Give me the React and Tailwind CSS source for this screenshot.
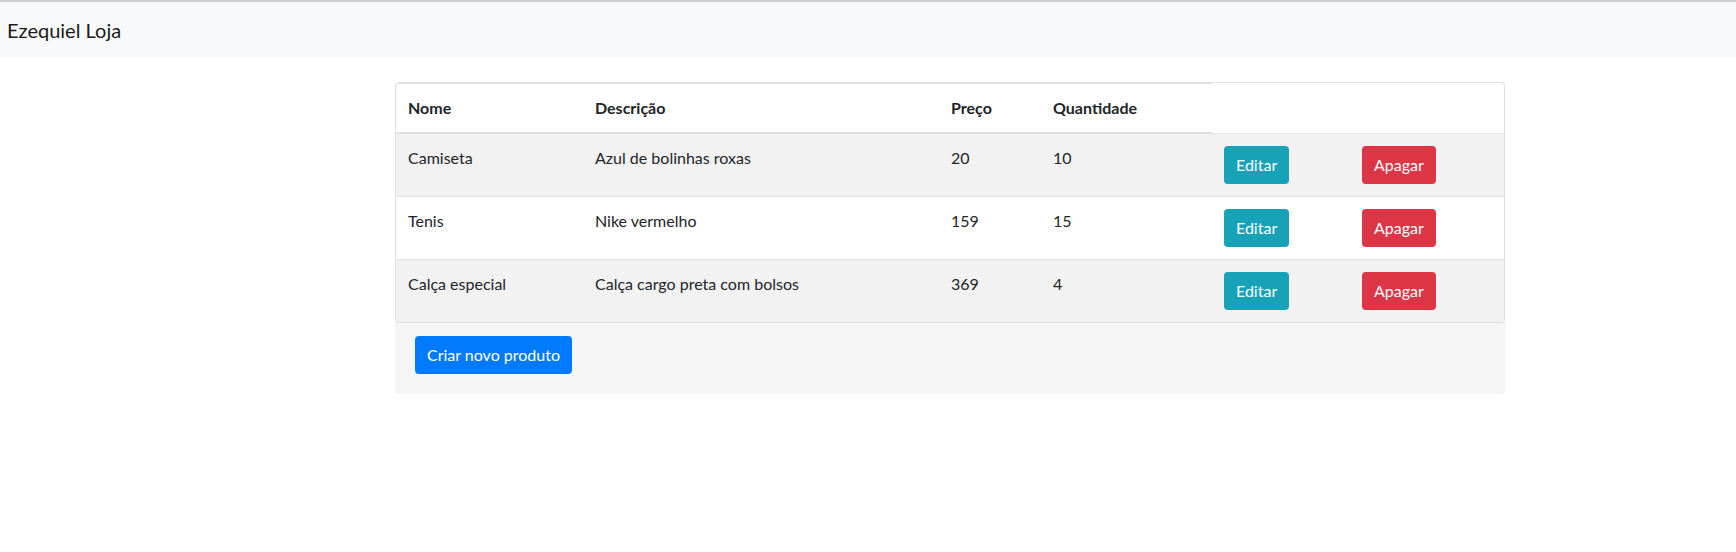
const products = [
  { nome: 'Camiseta', descricao: 'Azul de bolinhas roxas', preco: 20, quantidade: 10 },
  { nome: 'Tenis', descricao: 'Nike vermelho', preco: 159, quantidade: 15 },
  { nome: 'Calça especial', descricao: 'Calça cargo preta com bolsos', preco: 369, quantidade: 4 },
]

export default function App() {
  return (
    <div className="min-h-[552px] bg-white text-[#212529] font-['Lato','Noto_Sans',sans-serif] text-[16px] leading-6">
      <div className="h-[2px] bg-[#cdcfd2]"></div>
      <nav className="h-[56px] bg-[#f8f9fa] flex items-center px-[7px]">
        <span className="text-[20px] leading-[30px] text-[#1a1a1a]">Ezequiel Loja</span>
      </nav>

      <div className="ml-[395px] mt-[24px] w-[1110px] bg-[#f5f5f5] rounded pb-5">
        <div className="bg-white border border-[#dfdfdf] rounded overflow-hidden">
          <table className="w-full table-fixed border-collapse">
            <colgroup>
              <col className="w-[187px]" />
              <col className="w-[356px]" />
              <col className="w-[102px]" />
              <col className="w-[171px]" />
              <col className="w-[138px]" />
              <col />
            </colgroup>
            <thead>
              <tr>
                <th className="text-left font-bold px-3 py-3 border-t border-b-2 border-[#dee2e6] align-bottom">Nome</th>
                <th className="text-left font-bold px-3 py-3 border-t border-b-2 border-[#dee2e6] align-bottom">Descrição</th>
                <th className="text-left font-bold px-3 py-3 border-t border-b-2 border-[#dee2e6] align-bottom">Preço</th>
                <th className="text-left font-bold px-3 py-3 border-t border-b-2 border-[#dee2e6] align-bottom">Quantidade</th>
              </tr>
            </thead>
            <tbody>
              {products.map((p, i) => (
                <tr key={p.nome} className={i % 2 === 0 ? 'bg-[#f2f2f2]' : 'bg-white'}>
                  <td className="p-3 align-top border-t border-[#dee2e6]">{p.nome}</td>
                  <td className="p-3 align-top border-t border-[#dee2e6]">{p.descricao}</td>
                  <td className="p-3 align-top border-t border-[#dee2e6]">{p.preco}</td>
                  <td className="p-3 align-top border-t border-[#dee2e6]">{p.quantidade}</td>
                  <td className="p-3 align-top border-t border-[#dee2e6]">
                    <button className="h-[38px] px-3 rounded bg-[#17a2b8] text-white">Editar</button>
                  </td>
                  <td className="p-3 align-top border-t border-[#dee2e6]">
                    <button className="h-[38px] px-3 rounded bg-[#dc3545] text-white">Apagar</button>
                  </td>
                </tr>
              ))}
            </tbody>
          </table>
        </div>
        <button className="ml-5 mt-[13px] h-[38px] px-3 rounded bg-[#007bff] text-white">Criar novo produto</button>
      </div>
    </div>
  )
}
